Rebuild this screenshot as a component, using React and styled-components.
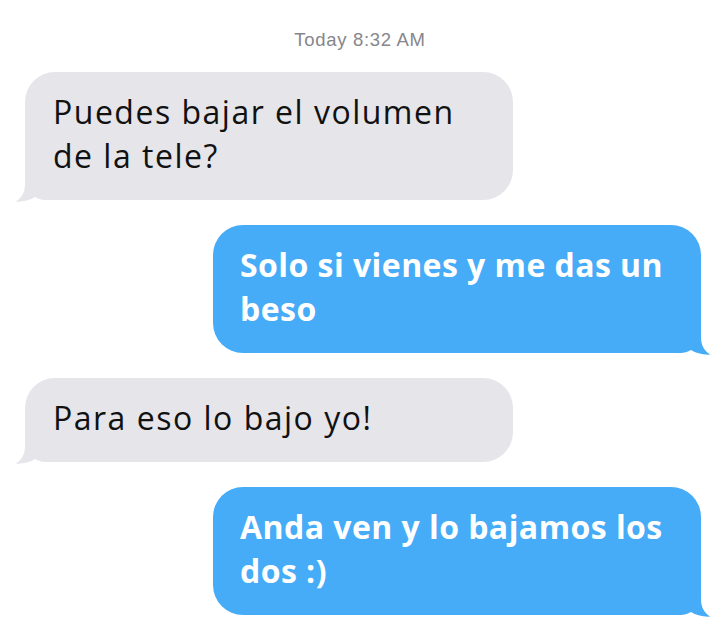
import React from "react";
import styled, { createGlobalStyle, css } from "styled-components";

const Global = createGlobalStyle`
  html, body { margin: 0; padding: 0; background: #ffffff; }
  body { font-family: "Open Sans", "Noto Sans", sans-serif; }
`;

const GREY = "#e5e5ea";
const BLUE = "#46acf7";

const Thread = styled.div`
  width: 728px;
  height: 638px;
  box-sizing: border-box;
  padding: 29px 27px 0 25px;
  display: flex;
  flex-direction: column;
  gap: 25px;
  overflow: hidden;
`;

const Stamp = styled.div`
  font-family: "Liberation Sans", Arial, sans-serif;
  font-size: 18.5px;
  line-height: 21px;
  letter-spacing: 0.7px;
  color: #86868b;
  text-align: center;
  margin-bottom: -3px;
  padding-right: 6px;
`;

const Bubble = styled.div`
  position: relative;
  box-sizing: border-box;
  width: 488px;
  padding: 18px 22px 22px 28px;
  border-radius: 30px;
  font-size: 32px;
  line-height: 44px;
  ${(p) =>
    p.$mine
      ? css`
          align-self: flex-end;
          background: ${BLUE};
          color: #ffffff;
          font-weight: 700;
          letter-spacing: 0.45px;
          padding-left: 27px;
        `
      : css`
          align-self: flex-start;
          background: ${GREY};
          color: #111111;
          font-weight: 400;
          letter-spacing: 1.5px;
        `}
`;

const Tail = styled.svg`
  position: absolute;
  bottom: -2px;
  width: 40px;
  height: 32px;
  ${(p) =>
    p.$mine
      ? css`
          right: -10px;
          transform: scaleX(-1);
        `
      : css`
          left: -10px;
        `}
`;

const Text = styled.span`
  position: relative;
  z-index: 1;
`;

const messages = [
  { mine: false, text: "Puedes bajar el volumen de la tele?" },
  { mine: true, text: "Solo si vienes y me das un beso" },
  { mine: false, text: "Para eso lo bajo yo!" },
  { mine: true, text: "Anda ven y lo bajamos los dos :)" },
];

export default function App() {
  return (
    <>
      <Global />
      <Thread>
        <Stamp>Today 8:32 AM</Stamp>
        {messages.map((m, i) => (
          <Bubble key={i} $mine={m.mine}>
            <Tail $mine={m.mine} viewBox="0 0 40 32" aria-hidden="true">
              <path
                d="M10 0 L10 14 C10 22 7 28 0.5 31.6 C9 32 15 30 20 27 C24 29.5 28 30 34 30 L40 30 L40 0 Z"
                fill={m.mine ? BLUE : GREY}
              />
            </Tail>
            <Text>{m.text}</Text>
          </Bubble>
        ))}
      </Thread>
    </>
  );
}
